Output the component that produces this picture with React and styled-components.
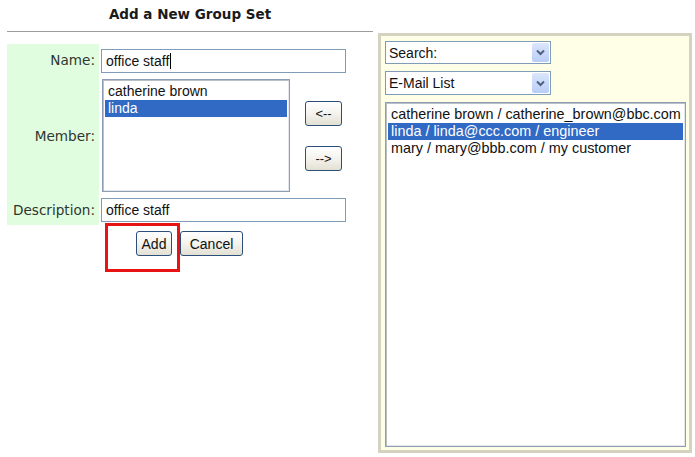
import React from "react";
import styled, { createGlobalStyle } from "styled-components";

const GlobalStyle = createGlobalStyle`
  html, body {
    margin: 0;
    padding: 0;
    background: #ffffff;
  }
  body {
    font-family: "Liberation Sans", Arial, sans-serif;
    font-size: 14px;
    color: #111;
  }
`;

const Page = styled.div`
  display: flex;
  align-items: flex-start;
  width: 695px;
  height: 457px;
`;

const LeftCol = styled.div`
  width: 366px;
  margin-left: 7px;
`;

const Title = styled.div`
  height: 31px;
  box-sizing: border-box;
  padding: 6px 0 0 0;
  text-align: center;
  font-family: "DejaVu Sans", Verdana, sans-serif;
  font-weight: bold;
  font-size: 13.5px;
  line-height: 17px;
  color: #1a1a1a;
`;

const Rule = styled.div`
  height: 1px;
  background: #9c9c98;
`;

const FormGrid = styled.div`
  display: grid;
  grid-template-columns: 92px 245px;
  column-gap: 2px;
  margin-top: 12px;
`;

const Label = styled.div`
  background: #e0fde0;
  display: flex;
  align-items: center;
  justify-content: flex-end;
  padding-right: 4px;
  font-family: "DejaVu Sans", Tahoma, sans-serif;
  font-size: 13.6px;
  color: #2f352f;
`;

const Field = styled.div`
  display: flex;
  align-items: center;
  padding: ${(p) => p.$pad || "3px 0 3px 0"};
`;

const TextBox = styled.div`
  width: 245px;
  height: 24px;
  box-sizing: border-box;
  border: 1px solid #7f9db9;
  padding: 0 4px;
  display: flex;
  align-items: center;
  font-size: 14px;
  color: #111;
  background: #fff;
`;

const Caret = styled.span`
  display: inline-block;
  width: 1px;
  height: 16px;
  background: #000;
  margin-left: 1px;
`;

const ListBox = styled.div`
  width: ${(p) => p.$w}px;
  height: ${(p) => p.$h}px;
  box-sizing: border-box;
  border: 1px solid #8d9db3;
  box-shadow: inset 1px 1px 0 #b9c0c8, inset -1px -1px 0 #e4e8ec;
  padding: 3px 2px;
  background: #fff;
  font-size: ${(p) => p.$fs || 14}px;
  margin-left: ${(p) => p.$ml || 0}px;
`;

const Option = styled.div`
  height: 17px;
  line-height: 17px;
  padding-left: 3px;
  white-space: nowrap;
  background: ${(p) => (p.$selected ? "#316ac5" : "transparent")};
  color: ${(p) => (p.$selected ? "#fff" : "#111")};
`;

const MoveButtons = styled.div`
  display: flex;
  flex-direction: column;
  gap: 20px;
  padding-left: 15px;
`;

const XPButton = styled.button`
  height: 25px;
  width: ${(p) => p.$w}px;
  box-sizing: border-box;
  padding: 0;
  border: 1px solid #2c4f7a;
  border-radius: 3px;
  background: linear-gradient(#ffffff 0%, #f4f3ee 50%, #e3e0d3 100%);
  font-family: "Liberation Sans", Arial, sans-serif;
  font-size: ${(p) => p.$fs || 14}px;
  color: #111;
  cursor: pointer;
`;

const ButtonRow = styled.div`
  position: relative;
  display: flex;
  gap: 8px;
  padding: 6px 0 0 129px;
`;

const RedMark = styled.div`
  position: absolute;
  left: 98px;
  top: -2px;
  width: 75px;
  height: 49px;
  box-sizing: border-box;
  border: 3px solid #e81414;
`;

const RightPanel = styled.div`
  width: 314px;
  height: 420px;
  margin: 33px 0 0 5px;
  box-sizing: border-box;
  border: 3px solid #d5d2bf;
  background: #fffee6;
  padding: 5px 3px 0 4px;
  display: flex;
  flex-direction: column;
  gap: 7px;
`;

const Dropdown = styled.div`
  width: 166px;
  height: ${(p) => p.$h}px;
  box-sizing: border-box;
  border: 1px solid #7f9db9;
  background: #fff;
  display: flex;
  align-items: stretch;
  font-size: 14px;
  color: #111;
`;

const DropText = styled.div`
  flex: 1;
  display: flex;
  align-items: center;
  padding-left: 3px;
`;

const DropArrow = styled.div`
  width: 17px;
  margin: 1px;
  border-radius: 2px;
  background: linear-gradient(#dce6fb, #b9cdf6);
  display: flex;
  align-items: center;
  justify-content: center;
`;

const Chevron = () => (
  <svg width="9" height="7" viewBox="0 0 9 7">
    <path d="M1 1.5 L4.5 5 L8 1.5" fill="none" stroke="#4d6185" strokeWidth="2" />
  </svg>
);

const members = ["catherine brown", "linda"];
const emails = [
  "catherine brown / catherine_brown@bbc.com",
  "linda / linda@ccc.com / engineer",
  "mary / mary@bbb.com / my customer",
];

const App = () => {
  return (
    <Page>
      <GlobalStyle />
      <LeftCol>
        <Title>Add a New Group Set</Title>
        <Rule />
        <FormGrid>
          <Label>Name:</Label>
          <Field $pad="5px 0 3px 0">
            <TextBox>
              office staff
              <Caret />
            </TextBox>
          </Field>

          <Label>Member:</Label>
          <Field>
            <ListBox $w={188} $h={113} $ml={1}>
              {members.map((m, i) => (
                <Option key={m} $selected={i === 1}>
                  {m}
                </Option>
              ))}
            </ListBox>
            <MoveButtons>
              <XPButton $w={37} $fs={13}>&lt;--</XPButton>
              <XPButton $w={37} $fs={13}>--&gt;</XPButton>
            </MoveButtons>
          </Field>

          <Label>Description:</Label>
          <Field>
            <TextBox>office staff</TextBox>
          </Field>
        </FormGrid>
        <ButtonRow>
          <XPButton $w={36}>Add</XPButton>
          <XPButton $w={63}>Cancel</XPButton>
          <RedMark />
        </ButtonRow>
      </LeftCol>

      <RightPanel>
        <Dropdown $h={23}>
          <DropText>Search:</DropText>
          <DropArrow>
            <Chevron />
          </DropArrow>
        </Dropdown>
        <Dropdown $h={24}>
          <DropText>E-Mail List</DropText>
          <DropArrow>
            <Chevron />
          </DropArrow>
        </Dropdown>
        <ListBox $w={301} $h={345} $fs={14.4}>
          {emails.map((e, i) => (
            <Option key={e} $selected={i === 1}>
              {e}
            </Option>
          ))}
        </ListBox>
      </RightPanel>
    </Page>
  );
};

export default App;
